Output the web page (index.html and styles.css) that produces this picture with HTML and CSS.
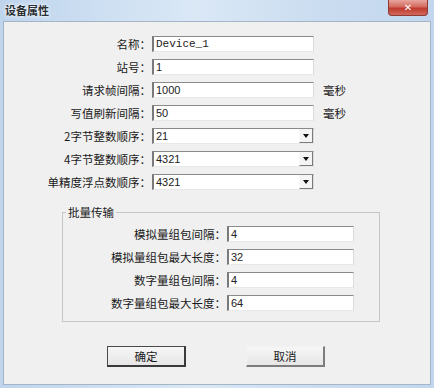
FILE: index.html
```html
<!DOCTYPE html>
<html>
<head>
<meta charset="UTF-8">
<link rel="stylesheet" href="styles.css">
</head>
<body>

<div class="window">
  <div class="titlebar">
    <span class="title">设备属性</span>
    <span class="close">&#x2715;</span>
  </div>

  <div class="client">
    <div class="form">
      <label>名称：</label>
      <div class="edit mono">Device_1</div>
      <span class="unit"></span>

      <label>站号：</label>
      <div class="edit">1</div>
      <span class="unit"></span>

      <label>请求帧间隔：</label>
      <div class="edit">1000</div>
      <span class="unit">毫秒</span>

      <label>写值刷新间隔：</label>
      <div class="edit">50</div>
      <span class="unit">毫秒</span>

      <label>2字节整数顺序：</label>
      <div class="edit combo"><span class="value">21</span><span class="arrow"></span></div>
      <span class="unit"></span>

      <label>4字节整数顺序：</label>
      <div class="edit combo"><span class="value">4321</span><span class="arrow"></span></div>
      <span class="unit"></span>

      <label>单精度浮点数顺序：</label>
      <div class="edit combo"><span class="value">4321</span><span class="arrow"></span></div>
      <span class="unit"></span>
    </div>

    <fieldset class="group">
      <legend>批量传输</legend>
      <div class="form group-form">
        <label>模拟量组包间隔：</label>
        <div class="edit">4</div>

        <label>模拟量组包最大长度：</label>
        <div class="edit">32</div>

        <label>数字量组包间隔：</label>
        <div class="edit">4</div>

        <label>数字量组包最大长度：</label>
        <div class="edit">64</div>
      </div>
    </fieldset>

    <div class="buttons">
      <button class="btn default">确定</button>
      <button class="btn">取消</button>
    </div>
  </div>
</div>

</body>
</html>
```

FILE: styles.css
```css
body {
  margin: 0;
  font-family: "Noto Sans CJK SC", "Liberation Sans", sans-serif;
  font-size: 11.5px;
  color: #1a1a1a;
}

.window {
  width: 434px;
  height: 388px;
  box-sizing: border-box;
  padding: 0 3px 3px 3px;
  background: linear-gradient(to right, #bfd5ed, #dae8f6 45%, #cadcf0 75%, #c2d7ee);
  display: flex;
  flex-direction: column;
}

.titlebar {
  height: 21px;
  display: flex;
  align-items: flex-start;
  padding: 0 3px 0 2px;
}

.title {
  margin-top: 2px;
  font-size: 11px;
  font-weight: 700;
  color: #2a2f36;
  text-shadow: 0 0 4px #ffffff, 0 0 2px #ffffff;
}

.close {
  margin-left: auto;
  width: 40px;
  height: 16px;
  box-sizing: border-box;
  border: 1px solid #8e3a35;
  border-top: none;
  border-radius: 0 0 4px 4px;
  background: linear-gradient(#e8a59d, #d46a5f 45%, #c0392f 55%, #d0695c);
  color: #ffffff;
  font-family: "DejaVu Sans", sans-serif;
  font-size: 10px;
  font-weight: 700;
  text-align: center;
  line-height: 15px;
}

.client {
  flex: 1;
  border: 1px solid #a4b5c8;
  background: #f0f0f0;
  padding-top: 14px;
}

.form {
  display: grid;
  grid-template-columns: 147px 162px 40px;
  grid-auto-rows: 16px;
  column-gap: 1px;
  row-gap: 7px;
}

.form label {
  text-align: right;
  line-height: 16px;
  white-space: nowrap;
}

.unit {
  padding-left: 8px;
  line-height: 16px;
}

.edit {
  box-sizing: border-box;
  background: #ffffff;
  border-top: 1px solid #8a8a8a;
  border-left: 2px solid #7a7a7a;
  border-right: 1px solid #dcdcdc;
  border-bottom: 1px solid #e8e8e8;
  padding-left: 2px;
  font-family: "Liberation Sans", sans-serif;
  font-size: 11px;
  line-height: 14px;
  color: #222;
}

.mono {
  font-family: "Liberation Mono", monospace;
  font-size: 11px;
}

.combo {
  display: flex;
  align-items: stretch;
}

.value {
  flex: 1;
}

.arrow {
  width: 14px;
  margin: 0 0 0 0;
  box-sizing: border-box;
  background: #f4f4f4;
  border-left: 1px solid #f8f8f8;
  border-right: 1px solid #7a7a7a;
  border-bottom: 1px solid #7a7a7a;
  display: flex;
  align-items: center;
  justify-content: center;
}

.arrow:before {
  content: "";
  border-left: 3px solid transparent;
  border-right: 3px solid transparent;
  border-top: 4px solid #111;
}

.group {
  margin: 15px 0 0 58px;
  width: 318px;
  box-sizing: border-box;
  border: 1px solid #c6c6c6;
  padding: 7px 0 10px 0;
}

.group legend {
  margin-left: 3px;
  padding: 0 2px;
  line-height: 14px;
}

.group-form {
  grid-template-columns: 163px 127px;
}

.buttons {
  display: flex;
  gap: 60px;
  margin: 24px 0 0 103px;
}

.btn {
  width: 79px;
  height: 21px;
  font-family: "Noto Sans CJK SC", sans-serif;
  font-size: 11.5px;
  color: #1a1a1a;
  padding: 0;
  background: linear-gradient(#f6f6f6, #e6e6e6);
  border-top: 1px solid #f2f2f2;
  border-left: 1px solid #f2f2f2;
  border-right: 2px solid #7c7c7c;
  border-bottom: 2px solid #7c7c7c;
}

.btn.default {
  border: 1px solid #4a4a4a;
  border-right: 2px solid #3a3a3a;
  border-bottom: 2px solid #3a3a3a;
}
```
